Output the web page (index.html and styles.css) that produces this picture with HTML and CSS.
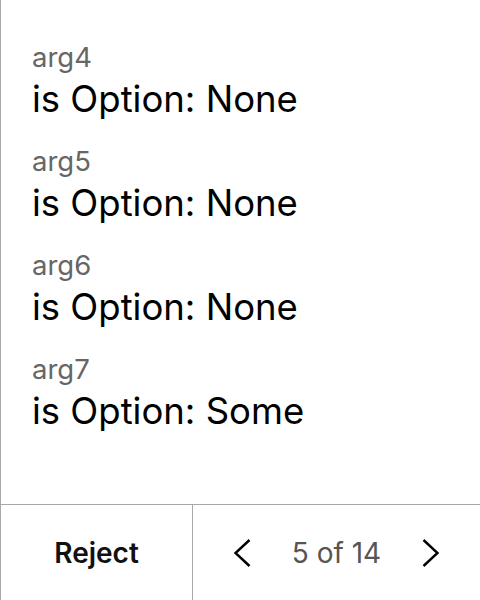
FILE: index.html
```html
<!DOCTYPE html>
<html>
<head>
<meta charset="utf-8">
<link rel="stylesheet" href="styles.css">
</head>
<body>
<div class="panel">
  <div class="list">
    <div class="item"><div class="label">arg4</div><div class="value">is Option: None</div></div>
    <div class="item"><div class="label">arg5</div><div class="value">is Option: None</div></div>
    <div class="item"><div class="label">arg6</div><div class="value">is Option: None</div></div>
    <div class="item"><div class="label">arg7</div><div class="value">is Option: Some</div></div>
  </div>
  <div class="footer">
    <div class="reject">Reject</div>
    <div class="pager">
      <svg class="chev" width="18" height="28" viewBox="0 0 18 28"><path d="M16.5 1 L2.5 14 L16.5 27" fill="none" stroke="#000" stroke-width="2.4"/></svg>
      <span class="count">5 of 14</span>
      <svg class="chev" width="18" height="28" viewBox="0 0 18 28"><path d="M1.5 1 L15.5 14 L1.5 27" fill="none" stroke="#000" stroke-width="2.4"/></svg>
    </div>
  </div>
</div>
</body>
</html>
```
FILE: styles.css
```css
html, body { margin: 0; padding: 0; background: #fff; }
body { font-family: Inter, "Noto Sans", sans-serif; }
.panel {
  width: 480px; height: 600px; box-sizing: border-box;
  border-left: 1px solid #a8a8a8;
  display: flex; flex-direction: column;
}
.list { flex: 1; padding: 37px 0 0 31px; display: flex; flex-direction: column; gap: 20px; }
.item { display: flex; flex-direction: column; }
.label { font-size: 27.5px; line-height: 40px; color: #666; }
.value { font-size: 36.5px; line-height: 44px; color: #000; }
.footer { height: 96px; box-sizing: border-box; border-top: 1px solid #a8a8a8; display: flex; }
.reject { width: 191px; border-right: 1px solid #a8a8a8; display: flex; align-items: center; justify-content: center; font-size: 28px; font-weight: 600; color: #111; }
.pager { flex: 1; display: flex; align-items: center; justify-content: center; gap: 41px; }
.count { font-size: 28px; color: #555; }
.chev { display: block; }
```
